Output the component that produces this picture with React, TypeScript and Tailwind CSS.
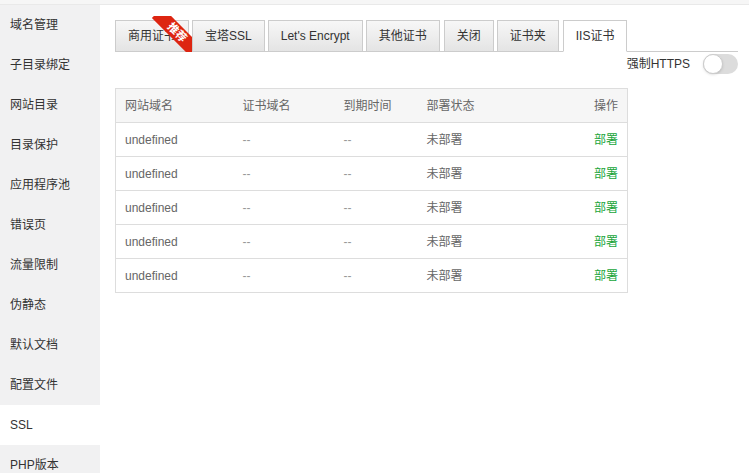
import React from "react";

const menu = [
  "域名管理",
  "子目录绑定",
  "网站目录",
  "目录保护",
  "应用程序池",
  "错误页",
  "流量限制",
  "伪静态",
  "默认文档",
  "配置文件",
  "SSL",
  "PHP版本",
];

const tabs = ["商用证书", "宝塔SSL", "Let's Encrypt", "其他证书", "关闭", "证书夹", "IIS证书"];

const rows = [1, 2, 3, 4, 5];

export default function App() {
  return (
    <div
      className="w-[749px] h-[473px] overflow-hidden bg-white text-[12px] text-[#333]"
      style={{ fontFamily: '"Liberation Sans", "Noto Sans CJK SC", sans-serif' }}
    >
      <div className="h-[5px] bg-[#f6f6f6] border-b border-[#e9e9e9]" />
      <div className="flex">
        <ul className="w-[100px] shrink-0 bg-[#f1f1f2]">
          {menu.map((m) => (
            <li
              key={m}
              className={`h-[40px] leading-[40px] pl-[10px] ${m === "SSL" ? "bg-white" : ""}`}
            >
              {m}
            </li>
          ))}
        </ul>

        <div className="flex-1 pt-[15px] pl-[15px] pr-[11px]">
          <div className="flex gap-[3px] border-b border-[#ccc]">
            {tabs.map((t) => {
              const active = t === "IIS证书";
              return (
                <div
                  key={t}
                  className={`relative h-[32px] leading-[30px] px-[12px] border border-[#ccc] mb-[-1px] ${
                    active
                      ? "bg-white border-b-white ml-[1px]"
                      : "bg-gradient-to-b from-[#f7f7f7] to-[#e4e4e4]"
                  } ${t === "其他证书" ? "mr-[1px]" : ""}`}
                >
                  {t}
                  {t === "商用证书" && (
                    <div className="absolute top-[-5px] right-[-4px] w-[41px] h-[36px] overflow-hidden">
                      <div className="absolute left-[-2px] top-[9px] w-[56px] h-[15px] bg-[#dd2511] rotate-45 text-white text-[11px] leading-[15px] text-center font-bold">
                        推荐
                      </div>
                    </div>
                  )}
                </div>
              );
            })}
          </div>

          <div className="flex justify-end items-center gap-[13px] h-[22px] mt-[1px] text-[#333]">
            <span>强制HTTPS</span>
            <div className="w-[35px] h-[20px] rounded-full bg-[#dcdcdc] relative">
              <div className="absolute left-0 top-0 w-[20px] h-[20px] rounded-full bg-white border border-[#ccc] shadow-sm" />
            </div>
          </div>

          <table className="mt-[13px] w-[513px] border-collapse border border-[#ddd] text-[#666]">
            <thead>
              <tr className="bg-[#f6f6f6] h-[34px]">
                <th className="font-normal text-left pl-[9px] w-[118px]">网站域名</th>
                <th className="font-normal text-left pl-[9px] w-[101px]">证书域名</th>
                <th className="font-normal text-left pl-[9px] w-[83px]">到期时间</th>
                <th className="font-normal text-left pl-[9px]">部署状态</th>
                <th className="font-normal text-right pr-[9px]">操作</th>
              </tr>
            </thead>
            <tbody>
              {rows.map((r) => (
                <tr key={r} className="h-[34px] border-t border-[#ddd]">
                  <td className="pl-[9px]">undefined</td>
                  <td className="pl-[9px] text-[#999]">--</td>
                  <td className="pl-[9px] text-[#999]">--</td>
                  <td className="pl-[9px]">未部署</td>
                  <td className="pr-[9px] text-right text-[#20a53a]">部署</td>
                </tr>
              ))}
            </tbody>
          </table>
        </div>
      </div>
    </div>
  );
}
